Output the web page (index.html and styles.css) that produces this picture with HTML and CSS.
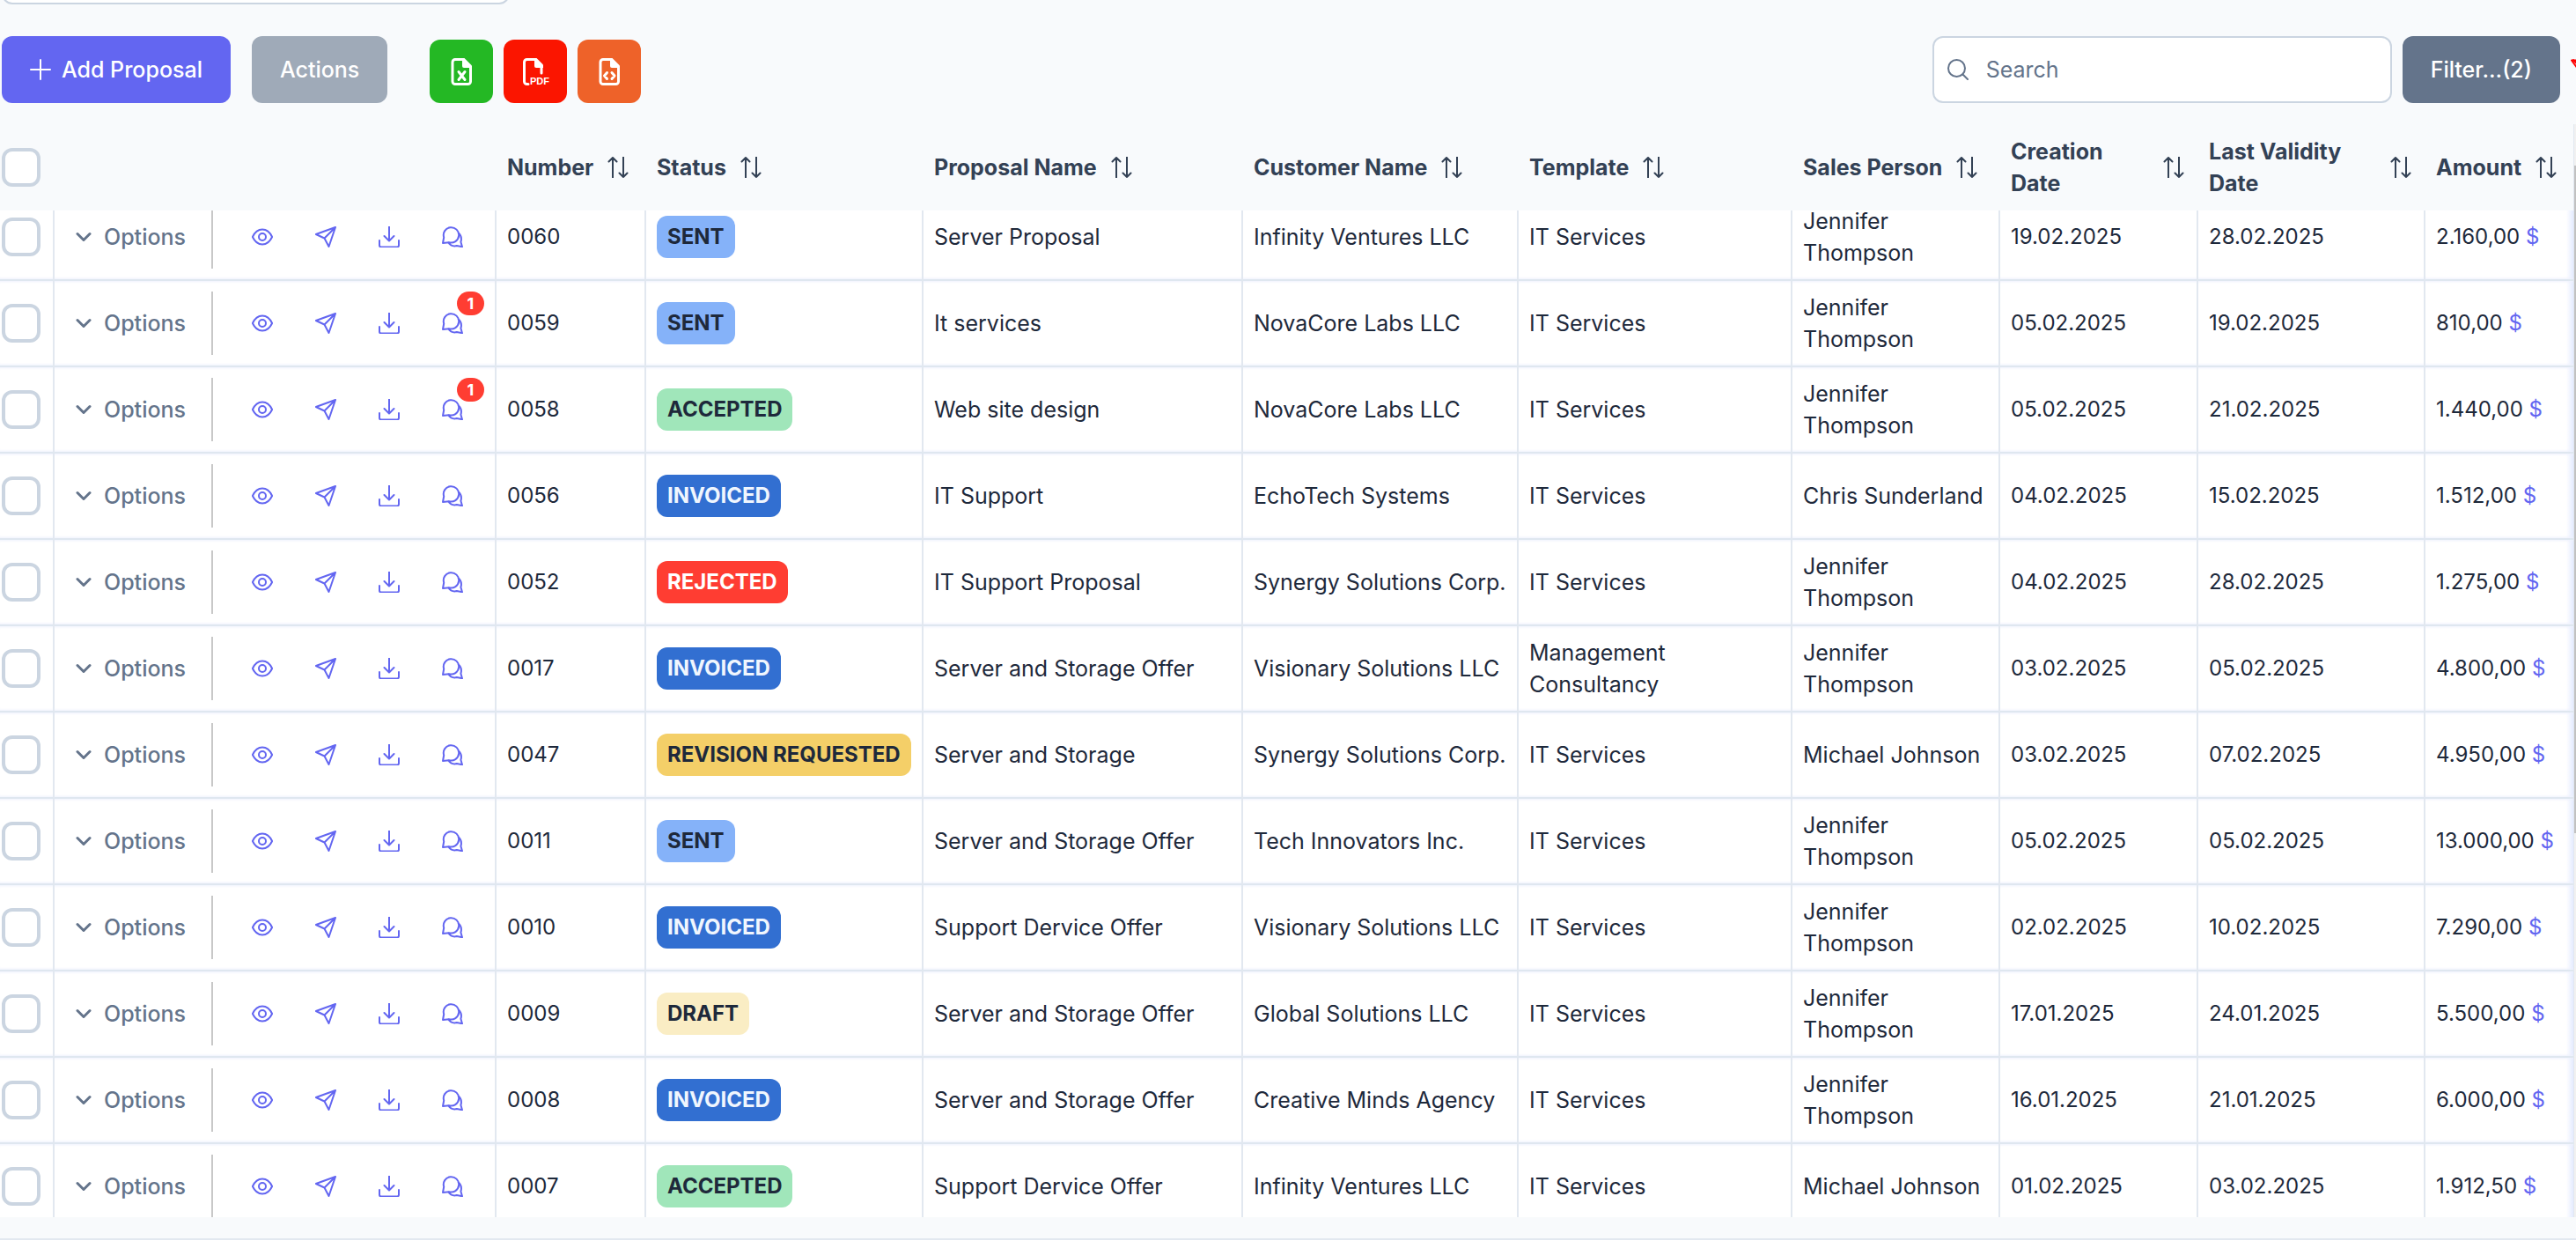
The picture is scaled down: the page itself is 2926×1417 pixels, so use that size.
FILE: index.html
```html
<!DOCTYPE html>
<html lang="en">
<head>
<meta charset="UTF-8">
<meta name="viewport" content="width=device-width, initial-scale=1.0">
<title>Proposals</title>
<link rel="stylesheet" href="styles.css">
</head>
<body>

<svg class="sprite" aria-hidden="true">
    <symbol id="icon-plus" viewBox="0 0 24 24"><path d="M12 1v22M1 12h22"/></symbol>
    <symbol id="icon-search" viewBox="0 0 24 24"><circle cx="10.5" cy="10.5" r="9.5"/><path d="M17.5 17.5L23 23"/></symbol>
    <symbol id="icon-clear" viewBox="0 0 24 24"><path d="M1 1.5h16M1 1.5l8 11v9.500h6v-10M20 5l-3 4M3 1l20 22"/></symbol>
    <symbol id="icon-sort" viewBox="0 0 24 24"><path d="M6 23.500V1M1.500 5.500L6 1l4.500 4.500M18 .5V23M13.500 18.500L18 23l4.500-4.500"/></symbol>
    <symbol id="icon-down" viewBox="0 0 18 24"><path d="M2 8.500l7 7 7-7"/></symbol>
    <symbol id="icon-eye" viewBox="0 0 24 24"><path d="M.9 12C3.500 6.500 7.500 3.500 12 3.500s8.500 3 11.100 8.500c-2.600 5.500-6.600 8.500-11.100 8.500S3.500 17.500.9 12z"/><circle cx="12" cy="12" r="4"/></symbol>
    <symbol id="icon-send" viewBox="0 0 24 24"><path d="M23 1L.9 9l9.600 4.500L15.500 23zM23 1L10.500 13.500"/></symbol>
    <symbol id="icon-download" viewBox="0 0 24 24"><path d="M12 .5V16M6.500 11l5.500 5.500 5.500-5.500M1 16v5.500a2 2 0 0 0 2 2h18a2 2 0 0 0 2-2V16"/></symbol>
    <symbol id="icon-chat" viewBox="0 0 24 24"><path d="M1 19l1.200-6.500A8.700 8.700 0 1 1 8 18.200zM18.700 7.500c3.100 2.600 4 6 2.700 10.300L23 23.200l-6.200-1.100c-4 .9-7.300-.3-9.600-3.800"/></symbol>
    <symbol id="icon-excel" viewBox="0 0 32 32"><path d="M18 2.500H9a3 3 0 0 0-3 3v22a3 3 0 0 0 3 3h14.500a3 3 0 0 0 3-3V11"/><path class="fold" d="M17 1h2.500L28 9.500V12H19a2 2 0 0 1-2-2z"/><path d="M13 16.500l7 9M20 16.500l-7 9"/></symbol>
    <symbol id="icon-pdf" viewBox="0 0 32 32"><path d="M16 2.500H6.500a3 3 0 0 0-3 3v22a3 3 0 0 0 3 3H8M23 10v8"/><path class="fold" d="M15 1h2.500L25 8.500V12h-8a2 2 0 0 1-2-2z"/><text class="pdf-label" x="10" y="31">PDF</text></symbol>
    <symbol id="icon-code" viewBox="0 0 32 32"><path d="M18 2.500H9a3 3 0 0 0-3 3v22a3 3 0 0 0 3 3h14.500a3 3 0 0 0 3-3V11"/><path class="fold" d="M17 1h2.500L28 9.500V12H19a2 2 0 0 1-2-2z"/><path d="M13.500 17.500L10.500 21l3 3.500M19 17.500l3 3.500-3 3.500"/></symbol>
</svg>

<main class="page">
    <div class="top-field">
        <input type="text" class="text-box" aria-label="Keyword">
    </div>

    <div class="toolbar">
        <button type="button" class="btn btn-primary"><svg class="icon"><use href="#icon-plus"/></svg>Add Proposal</button>
        <button type="button" class="btn btn-disabled">Actions</button>
        <div class="exports">
            <button type="button" class="btn-export excel" aria-label="Export to Excel"><svg><use href="#icon-excel"/></svg></button>
            <button type="button" class="btn-export pdf" aria-label="Export to PDF"><svg><use href="#icon-pdf"/></svg></button>
            <button type="button" class="btn-export code" aria-label="Export to XML"><svg><use href="#icon-code"/></svg></button>
        </div>
        <div class="filters">
            <label class="search">
                <svg class="icon"><use href="#icon-search"/></svg>
                <input type="search" placeholder="Search" aria-label="Search">
            </label>
            <button type="button" class="btn btn-filter">Filter...(2)</button>
            <button type="button" class="btn-clear" aria-label="Clear filters"><svg class="icon"><use href="#icon-clear"/></svg></button>
        </div>
    </div>

    <div class="table-area">
        <div class="table-scroll" id="tableScroll">
            <table>
                <colgroup>
                    <col class="col-check">
                    <col class="col-options">
                    <col class="col-number">
                    <col class="col-status">
                    <col class="col-name">
                    <col class="col-customer">
                    <col class="col-template">
                    <col class="col-person">
                    <col class="col-created">
                    <col class="col-valid">
                    <col class="col-amount">
                </colgroup>
                <thead>
                    <tr>
                        <th class="check"><input type="checkbox" aria-label="Select all"></th>
                        <th></th>
                        <th><div class="head">Number<svg class="icon"><use href="#icon-sort"/></svg></div></th>
                        <th><div class="head">Status<svg class="icon"><use href="#icon-sort"/></svg></div></th>
                        <th><div class="head">Proposal Name<svg class="icon"><use href="#icon-sort"/></svg></div></th>
                        <th><div class="head">Customer Name<svg class="icon"><use href="#icon-sort"/></svg></div></th>
                        <th><div class="head">Template<svg class="icon"><use href="#icon-sort"/></svg></div></th>
                        <th><div class="head">Sales Person<svg class="icon"><use href="#icon-sort"/></svg></div></th>
                        <th><div class="head wide"><span>Creation<br>Date</span><svg class="icon"><use href="#icon-sort"/></svg></div></th>
                        <th><div class="head wide"><span>Last Validity<br>Date</span><svg class="icon"><use href="#icon-sort"/></svg></div></th>
                        <th><div class="head">Amount<svg class="icon"><use href="#icon-sort"/></svg></div></th>
                    </tr>
                </thead>
                <tbody id="proposals"></tbody>
            </table>
        </div>
        <div class="rail"><div class="thumb"></div></div>
    </div>

    <footer class="pager"></footer>
</main>

<script src="script.js"></script>
</body>
</html>
```

FILE: styles.css
```css
* {
    box-sizing: border-box;
}

body {
    font-family: Inter, sans-serif;
    font-size: 25px;
    line-height: 36px;
    color: #1e293b;
    background-color: #f8fafc;
    margin: 0;
}

button,
input {
    font: inherit;
}

button {
    border: none;
    cursor: pointer;
}

svg {
    fill: none;
    stroke: currentColor;
    stroke-width: 2;
    stroke-linecap: round;
    stroke-linejoin: round;
}

.sprite {
    display: none;
}

.icon {
    width: 24px;
    height: 24px;
    flex: none;
}

.page {
    display: flex;
    flex-direction: column;
    height: 100vh;
    overflow: hidden;
}

/* field at the top edge */
.top-field {
    display: flex;
    align-items: flex-end;
    flex: none;
    height: 5px;
    padding-left: 2px;
    overflow: hidden;
}

.text-box {
    width: 577px;
    height: 76px;
    flex: none;
    background-color: #fff;
    border: 2px solid #cbd5e1;
    border-radius: 12px;
}

/* toolbar */
.toolbar {
    display: flex;
    align-items: flex-end;
    flex: none;
    padding: 36px 0 24px 2px;
}

.btn {
    display: flex;
    align-items: center;
    gap: 12px;
    height: 76px;
    padding: 0 32px;
    border-radius: 12px;
    color: #fff;
    font-weight: 500;
    white-space: nowrap;
}

.btn-primary {
    background-color: #6366f1;
    margin-right: 24px;
}

.btn-disabled {
    background-color: #9faab8;
    margin-right: 48px;
}

.btn-filter {
    background-color: #64748b;
}

.exports {
    display: flex;
    gap: 12px;
}

.btn-export {
    width: 72px;
    height: 72px;
    padding: 20px;
    border-radius: 12px;
    color: #fff;
}

.btn-export svg {
    display: block;
    width: 32px;
    height: 32px;
    stroke-width: 3;
}

.fold {
    fill: #fff;
    stroke: none;
}

.pdf-label {
    font-family: "Liberation Sans", sans-serif;
    font-size: 11px;
    font-weight: 700;
    fill: #fff;
    stroke: none;
}

.excel {
    background-color: #24b824;
}

.pdf {
    background-color: #fb1500;
}

.code {
    background-color: #ee6229;
}

.filters {
    display: flex;
    align-items: center;
    gap: 12px;
    margin-left: auto;
    margin-right: -18px;
}

.search {
    display: flex;
    align-items: center;
    gap: 20px;
    width: 522px;
    height: 76px;
    padding: 0 15px;
    background-color: #fff;
    border: 2px solid #cbd5e1;
    border-radius: 12px;
    color: #64748b;
}

.search input {
    flex: 1;
    min-width: 0;
    padding: 0;
    border: none;
    outline: none;
    background: none;
}

.search input::placeholder {
    color: #64748b;
}

.btn-clear {
    display: flex;
    padding: 0;
    background: none;
    color: #f00;
}

/* table */
.table-area {
    display: flex;
    flex: 1;
    min-height: 0;
}

.table-scroll {
    flex: 1;
    min-width: 0;
    overflow: auto;
    scrollbar-width: none;
}

table {
    width: 100%;
    table-layout: fixed;
    border-collapse: separate;
    border-spacing: 0;
}

.col-check { width: 62px; }
.col-options { width: 502px; }
.col-number { width: 170px; }
.col-status { width: 315px; }
.col-name { width: 363px; }
.col-customer { width: 313px; }
.col-template { width: 311px; }
.col-person { width: 236px; }
.col-created { width: 225px; }
.col-valid { width: 258px; }
.col-amount { width: 168px; }

th {
    position: sticky;
    top: 0;
    z-index: 2;
    height: 98px;
    padding: 0 16px 0 12px;
    background-color: #f8fafc;
    color: #334155;
    font-weight: 700;
    text-align: left;
}

td {
    height: 98px;
    padding: 0 12px;
    background-color: #fff;
    border-right: 2px solid #e2e8f0;
    border-bottom: 2px solid #dfe7f0;
    box-shadow: inset 0 -3px 3px -2px #eef1fd, inset 0 3px 3px -2px #eef1fd;
    white-space: nowrap;
}

td:last-child {
    border-right: none;
    background: linear-gradient(to left, #e4ebff, #fff 8px);
}

.head {
    display: flex;
    align-items: center;
    gap: 16px;
    white-space: nowrap;
}

.head.wide {
    justify-content: space-between;
}

.check {
    padding: 0 0 0 2px;
}

input[type="checkbox"] {
    appearance: none;
    display: block;
    width: 44px;
    height: 44px;
    margin: 0;
    background-color: #fff;
    border: 4px solid #cbd5e1;
    border-radius: 12px;
}

.row-actions {
    display: flex;
    align-items: center;
}

.btn-options {
    display: flex;
    align-items: center;
    gap: 14px;
    height: 72px;
    width: 166px;
    padding: 0 0 0 12px;
    background: none;
    color: #64748b;
    font-weight: 500;
}

.btn-options svg {
    width: 18px;
    height: 24px;
    flex: none;
    stroke-width: 3;
}

.actions {
    display: flex;
    padding-left: 20px;
    border-left: 2px solid #c8c8c8;
}

.btn-icon {
    position: relative;
    width: 72px;
    height: 72px;
    padding: 24px;
    background: none;
    color: #6366f1;
}

.btn-icon svg {
    display: block;
}

.count {
    position: absolute;
    top: 0;
    right: 0;
    min-width: 31px;
    height: 27px;
    border-radius: 14px;
    background-color: #ff3d32;
    color: #fff;
    font-size: 18px;
    font-weight: 700;
    line-height: 27px;
    text-align: center;
}

.tag {
    display: inline-block;
    padding: 6px 12px;
    border-radius: 12px;
    font-size: 24px;
    font-weight: 700;
}

.sent { background-color: #85b2f9; }
.accepted { background-color: #a0e6ba; }
.invoiced { background-color: #326fd1; color: #f0f6fe; }
.rejected { background-color: #ff3d32; color: #fff; }
.revision { background-color: #f4cf68; }
.draft { background-color: #faedc4; }

.figure {
    font-size: 24px;
}

.currency {
    color: #6366f1;
}

.rail {
    width: 3px;
    padding-top: 47px;
    background-color: #f1f1f1;
    border-left: 1px solid #e2e8f0;
}

.thumb {
    height: 758px;
    background-color: #c1c1c1;
}

.pager {
    flex: none;
    height: 11px;
    margin-top: 24px;
    background-color: #fff;
    border-top: 2px solid #e2e8f0;
}
```

FILE: script.js
```js
var proposals = [
    ['0060', 'Sent', 'Server Proposal', 'Infinity Ventures LLC', 'IT Services', 'Jennifer Thompson', '19.02.2025', '28.02.2025', '2.160,00', 0],
    ['0059', 'Sent', 'It services', 'NovaCore Labs LLC', 'IT Services', 'Jennifer Thompson', '05.02.2025', '19.02.2025', '810,00', 1],
    ['0058', 'Accepted', 'Web site design', 'NovaCore Labs LLC', 'IT Services', 'Jennifer Thompson', '05.02.2025', '21.02.2025', '1.440,00', 1],
    ['0056', 'Invoiced', 'IT Support', 'EchoTech Systems', 'IT Services', 'Chris Sunderland', '04.02.2025', '15.02.2025', '1.512,00', 0],
    ['0052', 'Rejected', 'IT Support Proposal', 'Synergy Solutions Corp.', 'IT Services', 'Jennifer Thompson', '04.02.2025', '28.02.2025', '1.275,00', 0],
    ['0017', 'Invoiced', 'Server and Storage Offer', 'Visionary Solutions LLC', 'Management Consultancy', 'Jennifer Thompson', '03.02.2025', '05.02.2025', '4.800,00', 0],
    ['0047', 'Revision Requested', 'Server and Storage', 'Synergy Solutions Corp.', 'IT Services', 'Michael Johnson', '03.02.2025', '07.02.2025', '4.950,00', 0],
    ['0011', 'Sent', 'Server and Storage Offer', 'Tech Innovators Inc.', 'IT Services', 'Jennifer Thompson', '05.02.2025', '05.02.2025', '13.000,00', 0],
    ['0010', 'Invoiced', 'Support Dervice Offer', 'Visionary Solutions LLC', 'IT Services', 'Jennifer Thompson', '02.02.2025', '10.02.2025', '7.290,00', 0],
    ['0009', 'Draft', 'Server and Storage Offer', 'Global Solutions LLC', 'IT Services', 'Jennifer Thompson', '17.01.2025', '24.01.2025', '5.500,00', 0],
    ['0008', 'Invoiced', 'Server and Storage Offer', 'Creative Minds Agency', 'IT Services', 'Jennifer Thompson', '16.01.2025', '21.01.2025', '6.000,00', 0],
    ['0007', 'Accepted', 'Support Dervice Offer', 'Infinity Ventures LLC', 'IT Services', 'Michael Johnson', '01.02.2025', '03.02.2025', '1.912,50', 0]
];

function iconButton(icon, label, count) {
    return '<button type="button" class="btn-icon" aria-label="' + label + '">' +
        '<svg class="icon"><use href="#icon-' + icon + '"/></svg>' +
        (count ? '<span class="count">' + count + '</span>' : '') + '</button>';
}

function proposalRow(p) {
    var status = p[1].toLowerCase().split(' ')[0];
    var person = p[5] === 'Jennifer Thompson' ? 'Jennifer<br>Thompson' : p[5];
    var template = p[4] === 'Management Consultancy' ? 'Management<br>Consultancy' : p[4];

    return '<tr>' +
        '<td class="check"><input type="checkbox" aria-label="Select ' + p[0] + '"></td>' +
        '<td><div class="row-actions">' +
        '<button type="button" class="btn-options"><svg><use href="#icon-down"/></svg>Options</button>' +
        '<div class="actions">' +
        iconButton('eye', 'View') +
        iconButton('send', 'Send') +
        iconButton('download', 'Download') +
        iconButton('chat', 'Messages', p[9]) +
        '</div></div></td>' +
        '<td class="figure">' + p[0] + '</td>' +
        '<td><span class="tag ' + status + '">' + p[1].toUpperCase() + '</span></td>' +
        '<td>' + p[2] + '</td>' +
        '<td>' + p[3] + '</td>' +
        '<td>' + template + '</td>' +
        '<td>' + person + '</td>' +
        '<td class="figure">' + p[6] + '</td>' +
        '<td class="figure">' + p[7] + '</td>' +
        '<td class="figure">' + p[8] + ' <span class="currency">$</span></td>' +
        '</tr>';
}

document.getElementById('proposals').innerHTML = proposals.map(proposalRow).join('');
document.getElementById('tableScroll').scrollTop = 18;
```
